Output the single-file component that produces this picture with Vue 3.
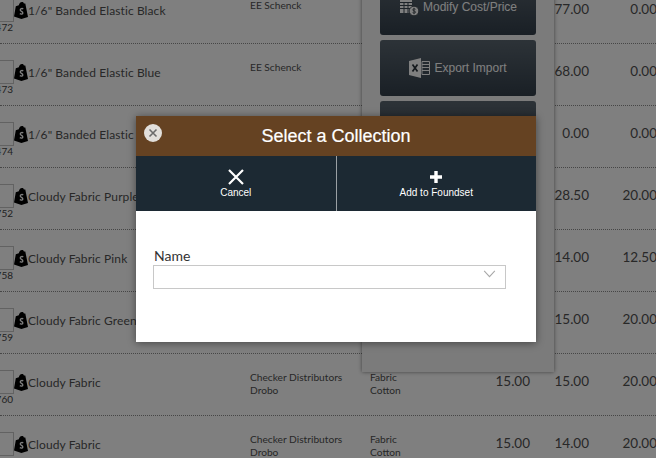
<script setup>
const rows = [
  { id: '1472', name: '1/6" Banded Elastic Black', vendor: ['EE Schenck'], cat: [], a: '', b: '77.00', c: '0.00' },
  { id: '1473', name: '1/6" Banded Elastic Blue', vendor: ['EE Schenck'], cat: [], a: '', b: '68.00', c: '0.00' },
  { id: '1474', name: '1/6" Banded Elastic', vendor: [], cat: [], a: '', b: '0.00', c: '0.00' },
  { id: '1752', name: 'Cloudy Fabric Purple', vendor: [], cat: [], a: '', b: '28.50', c: '20.00' },
  { id: '1758', name: 'Cloudy Fabric Pink', vendor: [], cat: [], a: '', b: '14.00', c: '12.50' },
  { id: '1759', name: 'Cloudy Fabric Green', vendor: [], cat: [], a: '', b: '15.00', c: '20.00' },
  { id: '1760', name: 'Cloudy Fabric', vendor: ['Checker Distributors', 'Drobo'], cat: ['Fabric', 'Cotton'], a: '15.00', b: '15.00', c: '20.00' },
  { id: '1761', name: 'Cloudy Fabric', vendor: ['Checker Distributors', 'Drobo'], cat: ['Fabric', 'Cotton'], a: '15.00', b: '14.00', c: '20.00' }
]
</script>

<template>
  <div class="page">
    <div class="list">
      <div v-for="r in rows" :key="r.id" class="row">
        <div class="thumb">
          <div class="box"></div>
          <div class="id">{{ r.id }}</div>
        </div>
        <svg class="bag" viewBox="0 0 14 17" width="14" height="17">
          <path d="M0 14.600 1.800 4.200 4.800 3.300C5.300 1.200 6.500 0 8 0c1 0 1.500.5 1.900 1.400l1.400.1L14 15l-6.600 2z" fill="#000" />
          <path d="M9.300 6.800C8 6.200 6.300 6.700 6.300 7.900c0 1.500 2.500 1.600 2.500 3.100 0 1.200-1.600 1.400-3 .7" fill="none" stroke="#fff" stroke-width="1.400" />
        </svg>
        <div class="name">{{ r.name }}</div>
        <div class="small"><div v-for="v in r.vendor" :key="v">{{ v }}</div></div>
        <div class="small"><div v-for="v in r.cat" :key="v">{{ v }}</div></div>
        <div class="num">{{ r.a }}</div>
        <div class="num">{{ r.b }}</div>
        <div class="num">{{ r.c }}</div>
      </div>
    </div>

    <div class="panel">
      <div class="btn">
        <svg viewBox="0 0 20 18" width="20" height="18">
          <path d="M1 1h12v14H1z" fill="#fff" />
          <path d="M1 4.500h12M1 7.500h12M1 10.500h12M5 4.500V15M9 4.500V15" stroke="#3a4650" stroke-width="1" />
          <circle cx="15" cy="13" r="4.800" fill="#fff" stroke="#2a333b" stroke-width=".8" />
          <path d="M16.500 11.300c-1-.7-2.800-.5-2.800.6 0 1.300 2.900.9 2.900 2.200 0 1.100-1.900 1.200-3 .5M15 9.800v6.400" fill="none" stroke="#2a333b" stroke-width=".8" />
        </svg>
        <span>Modify Cost/Price</span>
      </div>
      <div class="btn">
        <svg viewBox="0 0 21 20" width="21" height="20">
          <path d="M0 3l12-3v20L0 17z" fill="#fff" />
          <path d="M3.500 6.500l5 7M8.500 6.500l-5 7" stroke="#2a333b" stroke-width="1.700" />
          <path d="M13 3.500h7.500v13H13z" fill="none" stroke="#fff" stroke-width="1" />
          <path d="M13 6.500h7M13 9.500h7M13 12.500h7" stroke="#fff" stroke-width="1" />
        </svg>
        <span>Export Import</span>
      </div>
      <div class="btn"></div>
    </div>

    <div class="overlay"></div>

    <div class="modal">
      <header class="head">
        <span class="close">
          <svg viewBox="0 0 10 10" width="10" height="10"><path d="M1.500 1.500l7 7M8.500 1.500l-7 7" stroke="#6b6b6b" stroke-width="1.600" /></svg>
        </span>
        <span class="title">Select a Collection</span>
      </header>
      <div class="tools">
        <div class="tool">
          <svg viewBox="0 0 16 16" width="16" height="16"><path d="M1 1l14 14M15 1L1 15" stroke="#fff" stroke-width="2.200" /></svg>
          <span>Cancel</span>
        </div>
        <div class="tool second">
          <svg viewBox="0 0 16 16" width="16" height="16"><path d="M8 2v12M2 8h12" stroke="#fff" stroke-width="3.400" /></svg>
          <span>Add to Foundset</span>
        </div>
      </div>
      <div class="body">
        <label class="label">Name</label>
        <div class="select">
          <svg viewBox="0 0 14 9" width="13" height="8"><path d="M1 1l6 6.500L13 1" fill="none" stroke="#a8a8a8" stroke-width="1.200" /></svg>
        </div>
      </div>
    </div>
  </div>
</template>

<style>
html, body { margin: 0; padding: 0; background: #fff; }
</style>

<style scoped>
.page {
  position: relative;
  width: 656px;
  height: 458px;
  overflow: hidden;
  background: #fff;
  font-family: Lato, "Liberation Sans", sans-serif;
}
.list { margin-top: -18px; }
.page::before { content: ""; display: table; }
.row {
  box-sizing: border-box;
  height: 62px;
  width: 672px;
  display: grid;
  grid-template-columns: 14px 14px 222px 120px 110px 50px 59px 68px;
  align-items: start;
  border-bottom: 1px dotted #8c8c8c;
  color: #505050;
}
.thumb { margin-top: 16px; display: flex; flex-direction: column; align-items: flex-end; }
.box { box-sizing: border-box; width: 30px; height: 24px; border: 1px solid #c4c4c4; flex: none; }
.id { font-size: 10px; line-height: 12px; margin-top: -1px; margin-right: 1px; color: #444; }
.bag { margin-top: 20px; }
.name { margin-top: 19px; font-size: 12px; line-height: 20px; white-space: nowrap; letter-spacing: .1px; }
.small { margin-top: 17px; font-size: 10.2px; line-height: 13px; white-space: nowrap; }
.num { margin-top: 17px; font-size: 13.5px; line-height: 20px; text-align: right; }
.panel {
  position: absolute;
  left: 362px;
  top: -40px;
  width: 192px;
  height: 412px;
  box-sizing: border-box;
  padding: 19px 18px 0;
  display: flex;
  flex-direction: column;
  gap: 5px;
  background: #f6f6f6;
  box-shadow: 0 0 4px rgba(0, 0, 0, .5);
}
.btn {
  height: 56px;
  flex: none;
  border-radius: 3px;
  background: linear-gradient(#5a6670, #333f4b);
  color: #fff;
  font-family: "Liberation Sans", Arial, sans-serif;
  font-size: 12px;
  display: flex;
  align-items: center;
  justify-content: center;
  gap: 4px;
}
.overlay { position: absolute; inset: 0; background: rgba(0, 0, 0, .5); }
.modal {
  position: absolute;
  left: 136px;
  top: 116px;
  width: 400px;
  height: 226px;
  background: #fff;
  box-shadow: 0 1px 8px rgba(0, 0, 0, .45);
  font-family: "Liberation Sans", Arial, sans-serif;
}
.head {
  position: relative;
  height: 40px;
  background: #654222;
  display: flex;
  align-items: center;
  justify-content: center;
}
.title { color: #fff; font-size: 18px; -webkit-text-stroke: .2px #fff; }
.close {
  position: absolute;
  left: 8px;
  top: 8px;
  width: 18px;
  height: 18px;
  border-radius: 50%;
  background: #e2dfdb;
  display: flex;
  align-items: center;
  justify-content: center;
}
.tools { height: 55px; background: #1c2933; display: flex; }
.tool {
  flex: 1;
  box-sizing: border-box;
  display: flex;
  flex-direction: column;
  align-items: center;
  padding-top: 13px;
  gap: 2px;
  color: #fff;
  font-size: 10px;
  line-height: 12px;
}
.tool svg { display: block; }
.second { border-left: 1px solid #9aa0a4; }
.body { padding: 35px 30px 0 17px; }
.label {
  display: block;
  margin-left: 1px;
  font-family: Lato, sans-serif;
  font-size: 14px;
  line-height: 19px;
  color: #333;
}
.select {
  box-sizing: border-box;
  height: 24px;
  border: 1px solid #c8c8c8;
  display: flex;
  justify-content: flex-end;
  padding: 4px 9px 0 0;
}
.select svg { display: block; }
</style>
